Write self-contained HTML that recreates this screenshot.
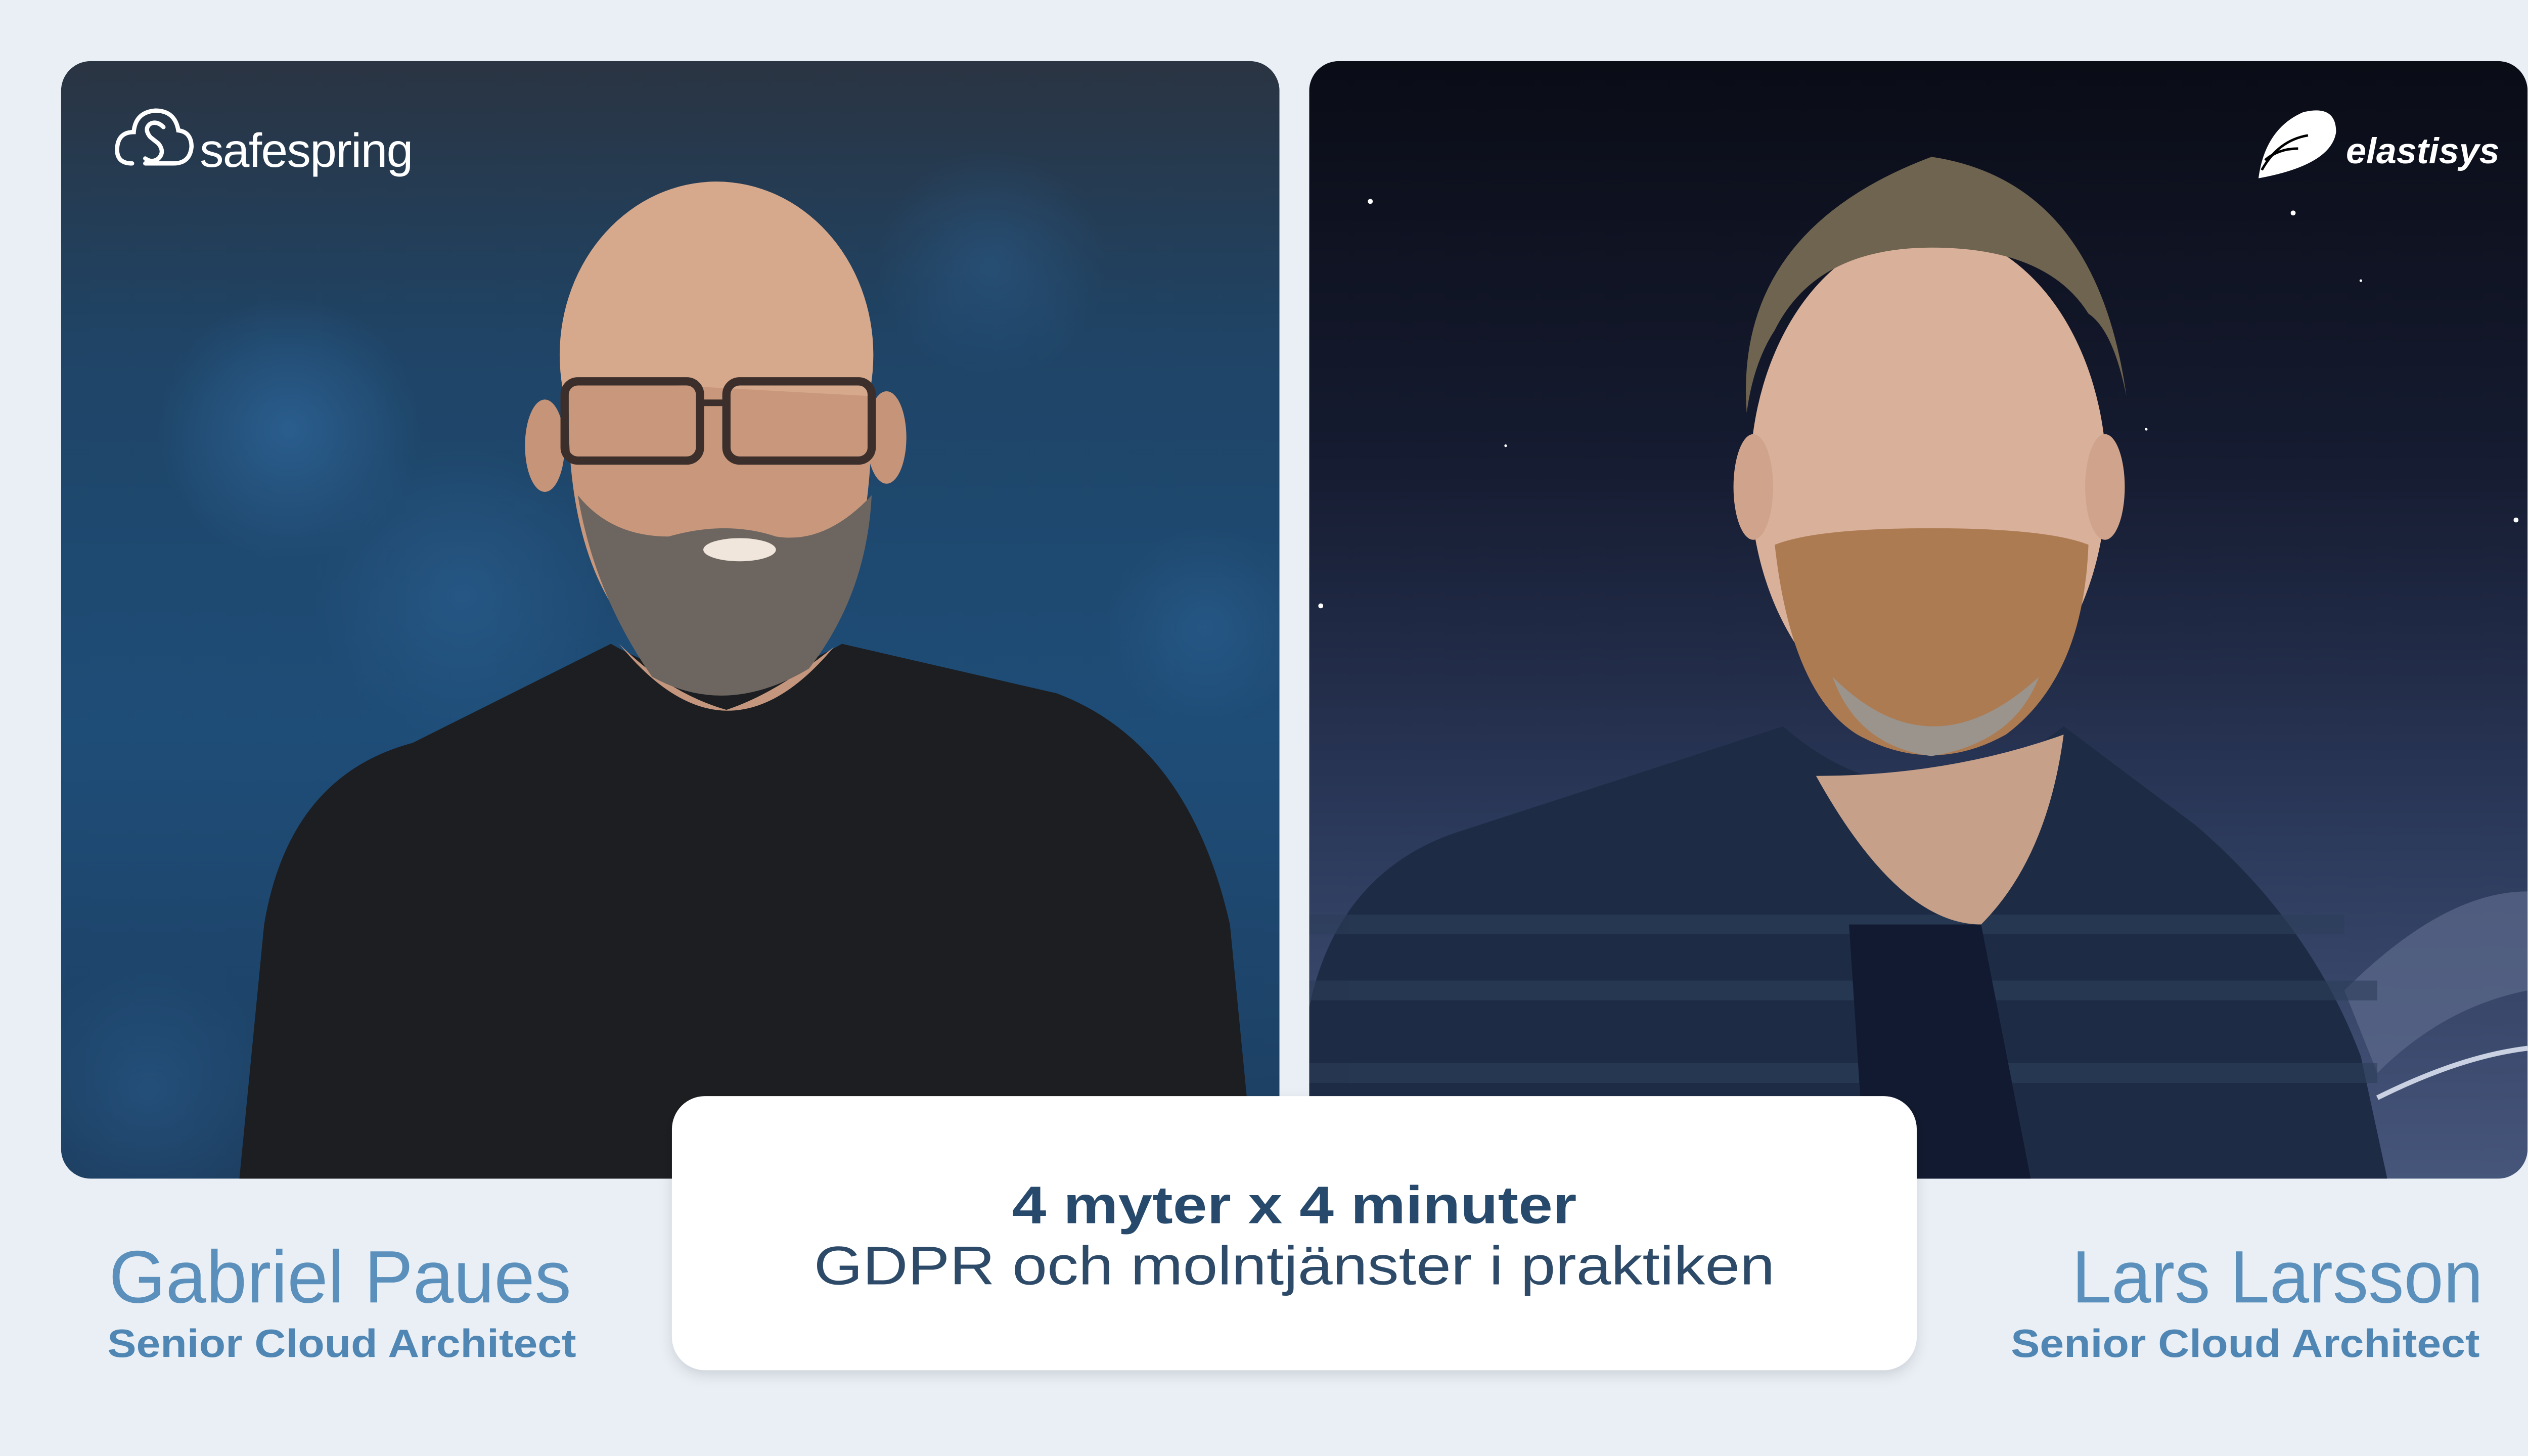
<!DOCTYPE html>
<html><head><meta charset="utf-8"><style>
html,body{margin:0;padding:0;background:#e9eff5;}
svg{display:block;}
</style></head><body>
<svg width="5120" height="2880" viewBox="0 0 1568 882" xmlns="http://www.w3.org/2000/svg">
<defs>
<clipPath id="cl"><rect x="37" y="37" width="738" height="677" rx="18"/></clipPath>
<clipPath id="cr"><rect x="793" y="37" width="738" height="677" rx="18"/></clipPath>
<linearGradient id="gl" x1="0" y1="0" x2="0" y2="1">
<stop offset="0" stop-color="#2a3442"/><stop offset="0.25" stop-color="#1f4466"/><stop offset="0.6" stop-color="#1e4d78"/><stop offset="1" stop-color="#1d3e60"/></linearGradient>
<linearGradient id="gr" x1="0" y1="0" x2="0" y2="1">
<stop offset="0" stop-color="#0a0c16"/><stop offset="0.35" stop-color="#151b30"/><stop offset="0.7" stop-color="#2c3a5c"/><stop offset="1" stop-color="#46557a"/></linearGradient>
<radialGradient id="bok" cx="0.5" cy="0.5" r="0.5"><stop offset="0" stop-color="#2d6396" stop-opacity="0.8"/><stop offset="1" stop-color="#2d6396" stop-opacity="0"/></radialGradient>
<filter id="sh" x="-10%" y="-10%" width="120%" height="130%"><feDropShadow dx="0" dy="3" stdDeviation="4" flood-color="#000" flood-opacity="0.12"/></filter>
</defs>
<rect width="1568" height="882" fill="#e9eff5"/>
<!-- left panel -->
<g clip-path="url(#cl)">
<rect x="37" y="37" width="738" height="677" fill="url(#gl)"/>
<circle cx="175" cy="260" r="80" fill="url(#bok)"/>
<circle cx="280" cy="360" r="90" fill="url(#bok)" opacity="0.6"/>
<circle cx="600" cy="160" r="70" fill="url(#bok)" opacity="0.5"/>
<circle cx="730" cy="380" r="60" fill="url(#bok)" opacity="0.6"/>
<circle cx="90" cy="660" r="80" fill="url(#bok)" opacity="0.5"/>
<!-- shirt -->
<path d="M145 714 L160 560 Q175 470 250 450 L370 390 Q440 430 510 390 L640 420 Q720 450 745 560 L760 714 Z" fill="#1c1e21"/>
<path d="M375 390 Q440 470 505 392 Q470 420 440 430 Q405 420 375 390Z" fill="#c4967e"/>
<!-- head -->
<ellipse cx="434" cy="215" rx="95" ry="105" fill="#d6a88c"/>
<path d="M345 230 Q340 330 380 380 Q430 430 490 395 Q530 350 528 240 Z" fill="#c9987c"/>
<ellipse cx="330" cy="270" rx="12" ry="28" fill="#c69478"/>
<ellipse cx="537" cy="265" rx="12" ry="28" fill="#c69478"/>
<path d="M350 300 Q360 360 395 410 Q440 435 490 405 Q525 360 528 300 Q500 330 470 325 Q440 315 405 325 Q370 325 350 300Z" fill="#6d6660"/>
<rect x="342" y="231" width="82" height="48" rx="8" fill="none" stroke="#3c2f2b" stroke-width="5"/>
<rect x="440" y="231" width="88" height="48" rx="8" fill="none" stroke="#3c2f2b" stroke-width="5"/>
<path d="M424 244 L440 244" stroke="#3c2f2b" stroke-width="4"/>
<ellipse cx="448" cy="333" rx="22" ry="7" fill="#f0e6dc"/>
</g>
<!-- right panel -->
<g clip-path="url(#cr)">
<rect x="793" y="37" width="738" height="677" fill="url(#gr)"/>
<g fill="#fff"><circle cx="830" cy="122" r="1.5"/><circle cx="1389" cy="129" r="1.5"/><circle cx="800" cy="367" r="1.5"/><circle cx="1524" cy="315" r="1.5"/><circle cx="912" cy="270" r="0.8"/><circle cx="1300" cy="260" r="0.8"/><circle cx="1430" cy="170" r="0.8"/></g>
<path d="M1420 600 Q1480 540 1531 540 L1531 600 Q1480 610 1440 650Z" fill="#5d6a8c" opacity="0.7"/>
<path d="M1440 665 Q1490 640 1531 635" stroke="#c9d1e2" stroke-width="3" fill="none"/>
<!-- shirt -->
<path d="M793 714 L793 610 Q810 530 880 505 L1080 440 Q1160 510 1250 440 L1330 500 Q1400 560 1430 640 L1446 714 Z" fill="#1d2b45"/>
<path d="M793 600 L1440 600 M793 650 L1440 650 M793 560 L1420 560" stroke="#2d3f5a" stroke-width="12" opacity="0.6"/>
<path d="M1100 470 Q1150 560 1200 560 Q1240 520 1250 445 Q1180 470 1100 470Z" fill="#c6a088"/>
<path d="M1120 560 L1200 560 L1230 714 L1130 714Z" fill="#111a30"/>
<!-- head -->
<ellipse cx="1168" cy="290" rx="108" ry="150" fill="#d9b09a"/>
<path d="M1058 250 Q1050 140 1170 95 Q1270 110 1288 240 Q1280 200 1265 190 Q1240 150 1170 150 Q1100 150 1075 200 Q1062 220 1058 250Z" fill="#6f6450"/>
<ellipse cx="1062" cy="295" rx="12" ry="32" fill="#d0a48c"/>
<ellipse cx="1275" cy="295" rx="12" ry="32" fill="#d0a48c"/>
<path d="M1075 330 Q1085 420 1125 445 Q1170 470 1215 445 Q1262 410 1265 330 Q1240 320 1170 320 Q1100 320 1075 330Z" fill="#ad7b52"/>
<path d="M1110 410 Q1170 470 1235 410 Q1220 450 1170 458 Q1125 452 1110 410Z" fill="#9a948d"/>
</g>
<!-- logos -->
<g fill="none" stroke="#fff" stroke-width="2.6" stroke-linecap="round">
<path d="M80 99 Q70 99 71 89 Q72 80 81 80 Q82 68 94 67 Q106 67 108 79 Q116 80 116 89 Q115 99 105 99 L88 99"/>
<path d="M99 77 Q95 73 91 75 Q87 78 91 83 L96 87 Q100 92 96 96 Q92 99 88 96"/>
</g>
<text x="121" y="101" font-family="Liberation Sans, sans-serif" font-size="29" fill="#fff" letter-spacing="-0.5">safespring</text>
<path d="M1368 108 Q1372 78 1395 68 Q1415 63 1415 80 Q1412 100 1368 108Z" fill="#fff"/>
<path d="M1370 103 Q1380 85 1398 82 M1372 97 Q1380 90 1392 90" stroke="#000" stroke-width="1.5" fill="none"/>
<text x="1421" y="99" font-family="Liberation Sans, sans-serif" font-style="italic" font-weight="bold" font-size="22" fill="#fff">elastisys</text>
<!-- caption -->
<rect x="407" y="664" width="754" height="166" rx="20" fill="#fff" filter="url(#sh)"/>
<text x="613" y="741" font-family="Liberation Sans, sans-serif" font-weight="bold" font-size="32" fill="#274a6c" textLength="342" lengthAdjust="spacingAndGlyphs">4 myter x 4 minuter</text>
<text x="493" y="778" font-family="Liberation Sans, sans-serif" font-size="33" fill="#2d4a68" textLength="582" lengthAdjust="spacingAndGlyphs">GDPR och molntjänster i praktiken</text>
<!-- names -->
<text x="66" y="789" font-family="Liberation Sans, sans-serif" font-size="45" fill="#5a90bb" textLength="280" lengthAdjust="spacingAndGlyphs">Gabriel Paues</text>
<text x="65" y="822" font-family="Liberation Sans, sans-serif" font-weight="bold" font-size="24" fill="#4f86b4" textLength="284" lengthAdjust="spacingAndGlyphs">Senior Cloud Architect</text>
<text x="1504" y="789" text-anchor="end" font-family="Liberation Sans, sans-serif" font-size="45" fill="#5a90bb" textLength="249" lengthAdjust="spacingAndGlyphs">Lars Larsson</text>
<text x="1502" y="822" text-anchor="end" font-family="Liberation Sans, sans-serif" font-weight="bold" font-size="24" fill="#4f86b4" textLength="284" lengthAdjust="spacingAndGlyphs">Senior Cloud Architect</text>
</svg>
</body></html>
